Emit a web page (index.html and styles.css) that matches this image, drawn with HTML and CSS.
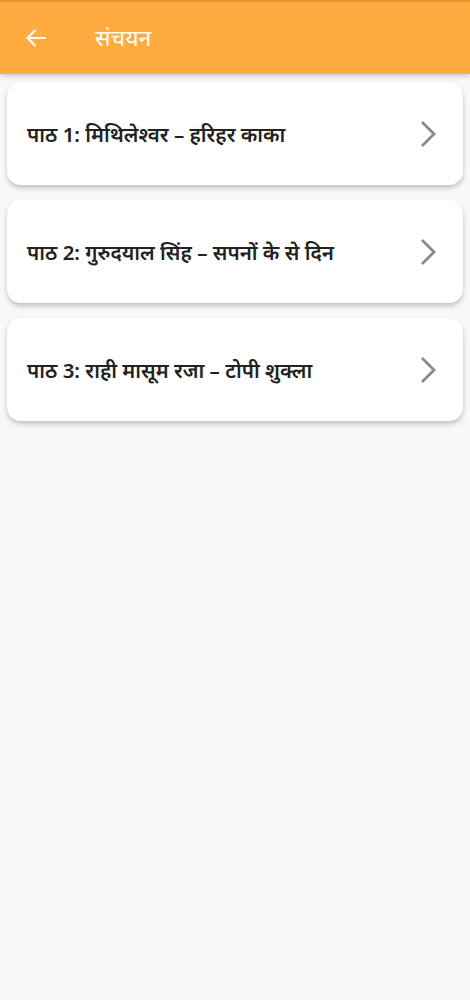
FILE: index.html
```html
<!DOCTYPE html>
<html lang="hi">
  <head>
    <meta charset="UTF-8" />
    <meta name="viewport" content="width=device-width, initial-scale=1.0" />
    <title>संचयन</title>
    <link rel="stylesheet" href="styles.css">
  </head>
  <body>
    <div class="wrap">
      <div class="topbar">
        <div class="back">
          <svg width="24" height="24" viewBox="0 0 24 24">
            <path d="M22 12H4M11.5 4L3.5 12l8 8" fill="none" stroke="#fff" stroke-width="2.2" />
          </svg>
        </div>
        <div class="title">संचयन</div>
      </div>

      <div class="list">
        <div class="item">
          <div class="name">पाठ 1: मिथिलेश्वर – हरिहर काका</div>
          <svg class="arrow" width="30" height="30" viewBox="0 0 30 30">
            <path d="M12 3l12 12-12 12" fill="none" stroke="#8a8a8a" stroke-width="2.8" />
          </svg>
        </div>
        <div class="item">
          <div class="name">पाठ 2: गुरुदयाल सिंह – सपनों के से दिन</div>
          <svg class="arrow" width="30" height="30" viewBox="0 0 30 30">
            <path d="M12 3l12 12-12 12" fill="none" stroke="#8a8a8a" stroke-width="2.8" />
          </svg>
        </div>
        <div class="item">
          <div class="name">पाठ 3: राही मासूम रजा – टोपी शुक्ला</div>
          <svg class="arrow" width="30" height="30" viewBox="0 0 30 30">
            <path d="M12 3l12 12-12 12" fill="none" stroke="#8a8a8a" stroke-width="2.8" />
          </svg>
        </div>
      </div>
    </div>
  </body>
</html>
```

FILE: styles.css
```css
* {
  margin: 0;
  padding: 0;
  box-sizing: border-box;
}

body {
  background: #f8f8f8;
  font-family: "Noto Sans", "Noto Sans Devanagari", Roboto, sans-serif;
}

.wrap {
  width: 100vw;
  min-height: 100vh;
}

.topbar {
  height: 74px;
  background: #ffab40;
  border-top: 2px solid #e8962c;
  display: flex;
  align-items: center;
  padding-left: 24px;
  box-shadow: 0 2px 5px rgba(0, 0, 0, 0.2);
}

.topbar .back {
  width: 24px;
  height: 24px;
  display: flex;
}

.topbar .title {
  margin-left: 47px;
  color: #fff;
  font-size: 23px;
  padding-bottom: 2px;
}

.list {
  display: flex;
  flex-direction: column;
  gap: 15px;
  padding: 8px 7px;
}

.list .item {
  height: 103px;
  background: #fff;
  border-radius: 14px;
  box-shadow: 0 3px 5px rgba(0, 0, 0, 0.22);
  display: flex;
  align-items: center;
  justify-content: space-between;
  padding: 0 23px 0 20px;
}

.list .item .name {
  font-size: 20.5px;
  font-weight: 600;
  color: #222;
}
```
